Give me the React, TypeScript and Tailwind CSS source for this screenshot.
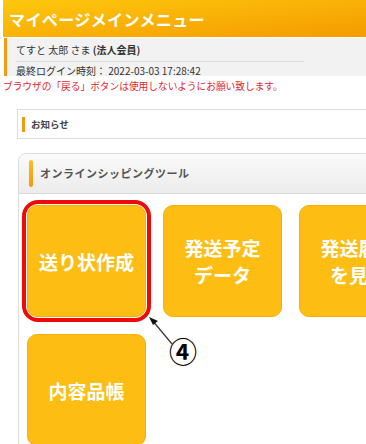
import React from 'react';

const font = { fontFamily: '"Noto Sans CJK JP", "Noto Sans", sans-serif' };

const ToolButton: React.FC<{ label: React.ReactNode; highlight?: boolean }> = ({ label, highlight }) => {
  const btn = (
    <div className="w-[119px] h-[112px] rounded-[10px] bg-[#fdbd12] border border-[#f7ad0a] flex items-center justify-center text-center text-white font-bold text-[19px] leading-[27px]">
      {label}
    </div>
  );
  if (!highlight) return btn;
  return <div className="-m-[5px] p-[1px] rounded-[16px] border-[4px] border-[#ee0a0a]">{btn}</div>;
};

export default function App() {
  return (
    <div className="w-[366px] h-[444px] overflow-hidden bg-white relative" style={font}>
      {/* Header */}
      <div className="ml-[3px] h-[37px] bg-gradient-to-br from-[#fdc80e] to-[#f49a00] pl-[6px] flex items-center">
        <h1 className="text-white font-bold text-[16px] tracking-[0.4px]">マイページメインメニュー</h1>
      </div>

      {/* User info */}
      <div className="mt-[1px] ml-[4px] h-[38px] bg-[#f2f2f2] border-l-[3px] border-[#f39a12] pl-[9px] text-[10px] text-[#333] leading-none">
        <div className="w-[288px] border-b border-[#dcdcdc] pt-[7px] pb-[6px]">
          てすと 太郎 さま <span className="font-bold">(法人会員)</span>
        </div>
        <div className="pt-[4px]">最終ログイン時刻： 2022-03-03 17:28:42</div>
      </div>

      <p className="pl-[3px] pt-[3px] text-[9.7px] leading-[14px] text-[#e0262e]">
        ブラウザの「戻る」ボタンは使用しないようにお願い致します。
      </p>

      {/* News */}
      <div className="mt-[16px] ml-[17px] w-[380px] h-[30px] border border-[#dcdcdc] bg-white flex items-center pl-[4px]">
        <span className="w-[3px] h-[15px] bg-[#f39a12] mr-[6px]" />
        <span className="text-[9.5px] font-bold text-[#444]">お知らせ</span>
      </div>

      {/* Online shipping tool */}
      <div className="mt-[14px] ml-[18px] w-[400px] rounded-tl-[8px] border border-[#dcdcdc]">
        <div className="h-[40px] rounded-tl-[8px] bg-gradient-to-b from-[#fafafa] to-[#ececec] border-b border-[#dcdcdc] flex items-center pl-[10px]">
          <span className="w-[4px] h-[27px] rounded-full bg-gradient-to-b from-[#fbbf2a] to-[#f39800] mr-[7px]" />
          <span className="text-[11px] font-bold text-[#555] tracking-[0.5px]">オンラインシッピングツール</span>
        </div>
        <div className="pl-[8px] pt-[11px] grid grid-cols-[119px_119px_119px] gap-x-[17px] gap-y-[17px]">
          <ToolButton label="送り状作成" highlight />
          <ToolButton label={<>発送予定<br />データ</>} />
          <ToolButton label={<>発送履歴<br />を見る</>} />
          <ToolButton label="内容品帳" />
        </div>
      </div>

      {/* Annotation */}
      <svg className="absolute left-[144px] top-[312px]" width="34" height="36" viewBox="0 0 34 36">
        <line x1="28" y1="32" x2="8" y2="8" stroke="#333" strokeWidth="1.2" />
        <polygon points="5,5 14,9 9,13" fill="#111" />
      </svg>
      <div className="absolute left-[169px] top-[337px] text-[28px] leading-none font-bold text-black">④</div>
    </div>
  );
}
